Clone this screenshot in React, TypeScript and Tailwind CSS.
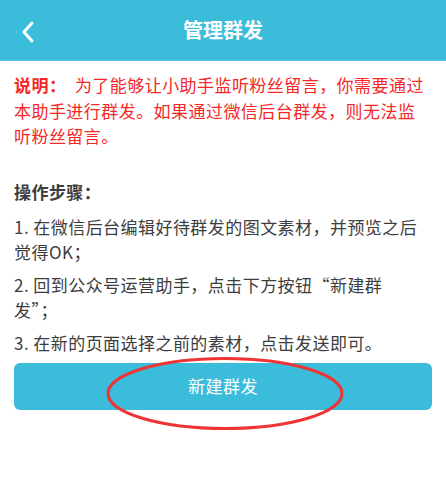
import React from 'react';

// line breaks kept as in the design
const steps = [
  ['1. 在微信后台编辑好待群发的图文素材，并预览之后', '觉得OK；'],
  ['2. 回到公众号运营助手，点击下方按钮“新建群', '发”；'],
  ['3. 在新的页面选择之前的素材，点击发送即可。'],
];

export default function App() {
  return (
    <div
      className="w-[446px] h-[480px] bg-white"
      style={{ fontFamily: '"Noto Sans CJK SC", "Noto Sans", sans-serif' }}
    >
      {/* header */}
      <div className="relative h-[61px] bg-[#3bbcdb] border-b border-[#56c7e2] flex items-center justify-center">
        <button className="absolute left-[18px] top-[20px] w-[20px] h-[24px] flex items-center justify-center">
          <svg width="14" height="22" viewBox="0 0 14 22" fill="none">
            <path d="M11 2 L3 11 L11 20" stroke="white" strokeWidth="3" strokeLinecap="round" strokeLinejoin="round" />
          </svg>
        </button>
        <h1 className="text-white text-[20px] font-bold">管理群发</h1>
      </div>

      <div className="px-[14px] pt-[11px] tracking-[0.45px]">
        <p className="text-[17px] leading-[25.5px] text-[#f52727]">
          <span className="font-bold">说明：</span>&nbsp;&nbsp;为了能够让小助手监听粉丝留言，你需要通过
          <br />
          本助手进行群发。如果通过微信后台群发，则无法监
          <br />
          听粉丝留言。
        </p>

        <h2 className="mt-[30px] text-[17px] leading-[25px] font-bold text-[#3d3d3d]">操作步骤：</h2>

        <div className="mt-[10px] flex flex-col gap-[8px]">
          {steps.map((lines) => (
            <p key={lines[0]} className="text-[17px] leading-[25px] text-[#3d3d3d]">
              {lines.map((l, i) => (
                <React.Fragment key={l}>
                  {i > 0 && <br />}
                  {l}
                </React.Fragment>
              ))}
            </p>
          ))}
        </div>

        <div className="relative mt-[8px]">
          <button className="w-full h-[47px] rounded-[6px] bg-[#3bbcdb] text-white text-[17px]">
            新建群发
          </button>
          <svg className="absolute left-[91px] top-[-7px] pointer-events-none" width="240" height="75" viewBox="0 0 240 75">
            <ellipse cx="120" cy="37.5" rx="117" ry="35" fill="none" stroke="#ee3434" strokeWidth="3" />
          </svg>
        </div>
      </div>
    </div>
  );
}
